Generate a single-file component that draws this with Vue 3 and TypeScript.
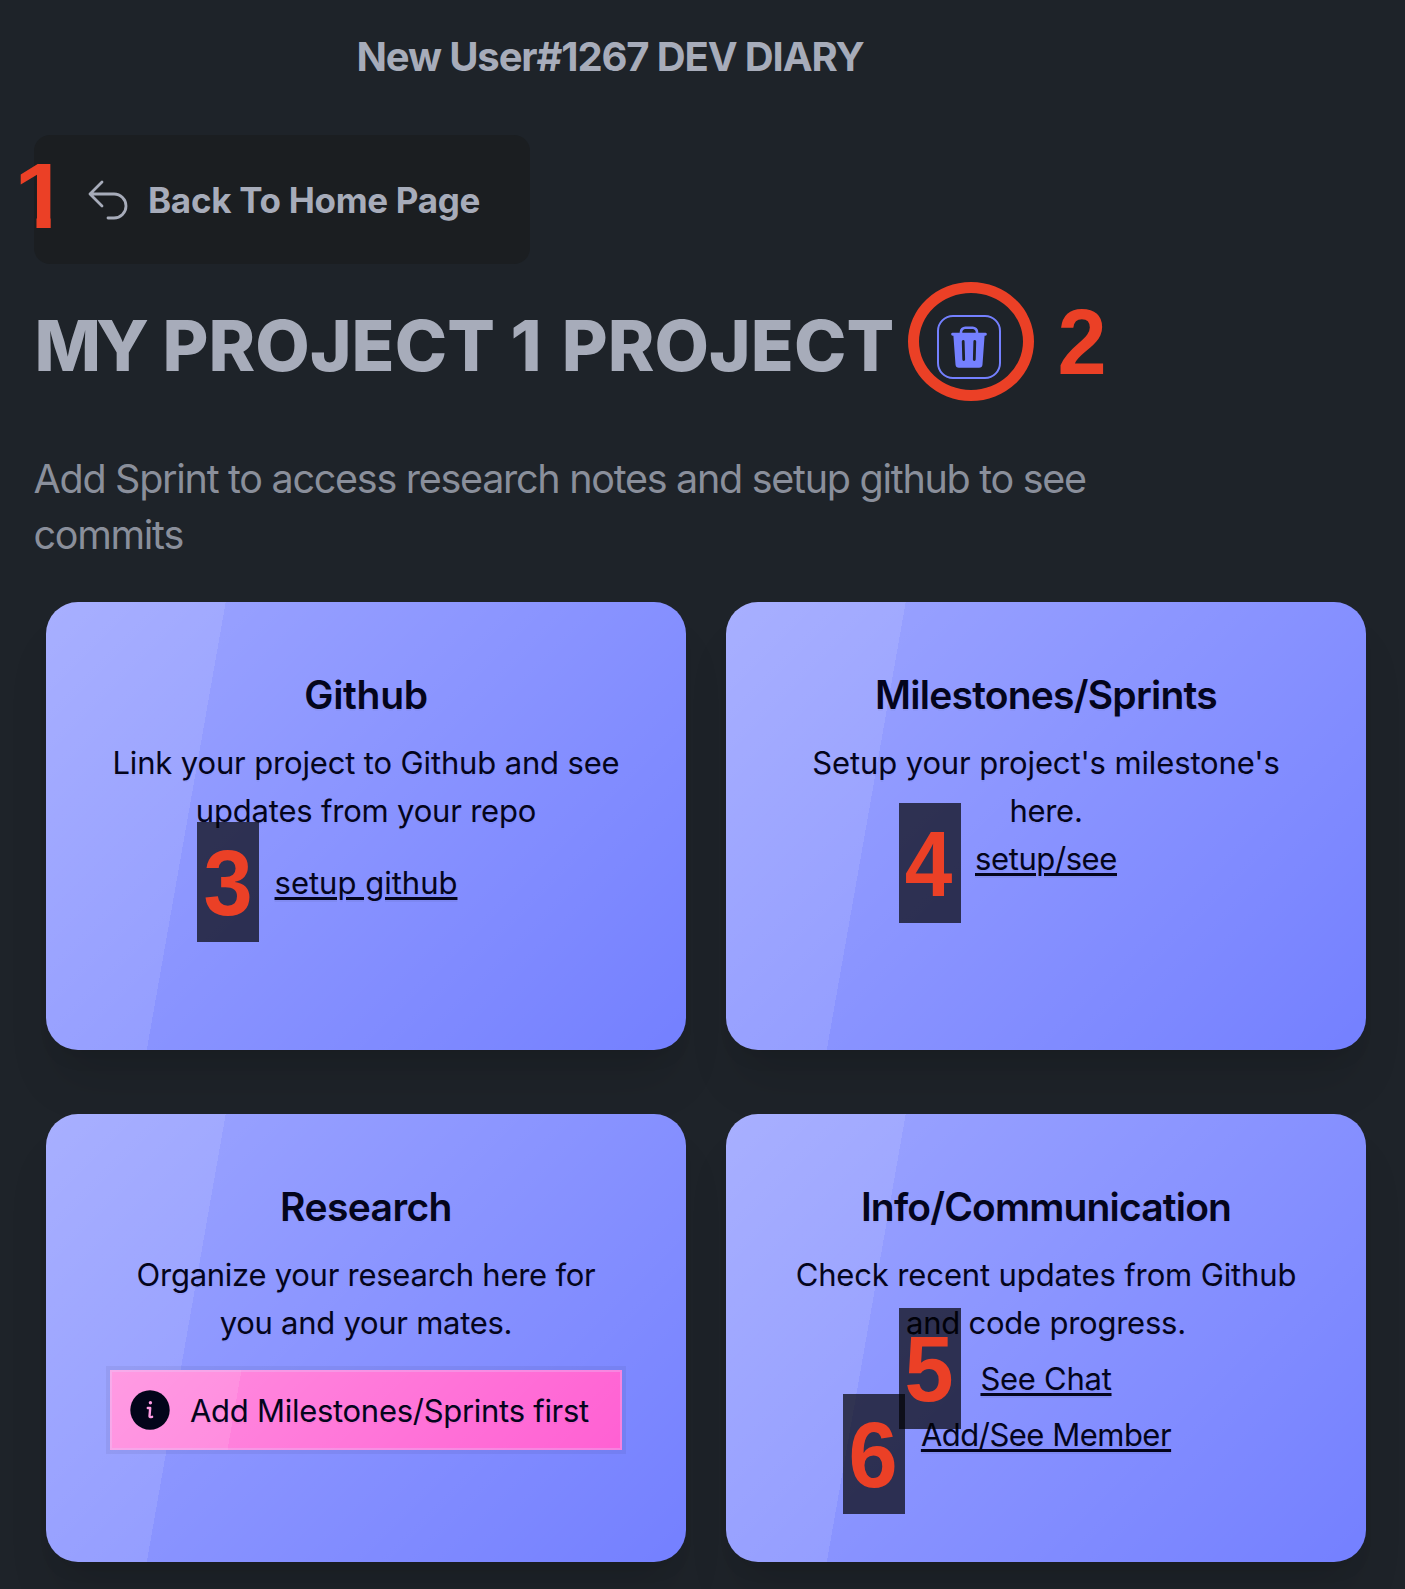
<script setup lang="ts">
interface Line { text: string; ls: number }
interface Card { title: Line; lines: Line[]; links: Line[]; kind: string; alert?: Line }
interface Mark { n: number; x: number; y: number; plate: boolean }

const track = (l: Line) => ({ letterSpacing: l.ls + 'px' })

const heading: Line[] = [
  { text: 'MY', ls: -5 },
  { text: ' ', ls: 3 },
  { text: 'PROJECT ', ls: 0.1 },
  { text: '1 ', ls: 2.3 },
  { text: 'PROJECT', ls: 0.1 },
]
const cards: Card[] = [
  {
    title: { text: 'Github', ls: -0.3 },
    lines: [{ text: 'Link your project to Github and see', ls: -0.15 }, { text: 'updates from your repo', ls: -0.2 }],
    links: [{ text: 'setup github', ls: 0 }],
    kind: 'spaced',
  },
  {
    title: { text: 'Milestones/Sprints', ls: -0.77 },
    lines: [{ text: "Setup your project's milestone's", ls: -0.13 }, { text: 'here.', ls: -0.3 }],
    links: [{ text: 'setup/see', ls: -0.4 }],
    kind: 'tight',
  },
  {
    title: { text: 'Research', ls: -0.58 },
    lines: [{ text: 'Organize your research here for', ls: -0.27 }, { text: 'you and your mates.', ls: -0.28 }],
    links: [],
    kind: 'notice',
    alert: { text: 'Add Milestones/Sprints first', ls: -0.28 },
  },
  {
    title: { text: 'Info/Communication', ls: -0.83 },
    lines: [{ text: 'Check recent updates from Github', ls: -0.13 }, { text: 'and code progress.', ls: -0.24 }],
    links: [{ text: 'See Chat', ls: -0.28 }, { text: 'Add/See Member', ls: -0.5 }],
    kind: 'list',
  },
]
const marks: Mark[] = [
  { n: 1, x: 10.5, y: 134.5, plate: false },
  { n: 2, x: 1052, y: 280.5, plate: false },
  { n: 3, x: 197, y: 821.5, plate: true },
  { n: 4, x: 899, y: 802.5, plate: true },
  { n: 5, x: 899, y: 1308, plate: true },
  { n: 6, x: 843, y: 1393.5, plate: true },
]
</script>

<template>
  <main class="page">
    <header class="top">New User#1267 DEV DIARY</header>
    <a class="back">
      <svg viewBox="0 0 24 24" width="48" height="48" fill="none" stroke="currentColor" stroke-width="1.4" stroke-linecap="round" stroke-linejoin="round"><path d="M9 15 3 9m0 0 6-6M3 9h12a6 6 0 0 1 0 12h-3" /></svg>
      <span>Back To Home Page</span>
    </a>
    <div class="heading">
      <h1><span v-for="(w, i) in heading" :key="i" :style="track(w)">{{ w.text }}</span></h1>
      <button class="trash" aria-label="Delete project">
        <svg viewBox="0 0 36 42" width="36" height="42">
          <path d="M10 8V6a4.300 4.300 0 0 1 4.300-4.300h7.400A4.300 4.300 0 0 1 26 6V8" fill="none" stroke="#7480ff" stroke-width="2.600" />
          <path fill="#7480ff" d="M1.600 6.800H34.400a1.400 1.400 0 0 1 0 2.900H33.600L31.500 38.500a3.500 3.500 0 0 1-3.500 3.200H8a3.500 3.500 0 0 1-3.500-3.200L2.400 9.700H1.600a1.400 1.400 0 0 1 0-2.900Z" />
          <path d="M12.200 15.500 12.700 33.500M23.800 15.500 23.300 33.500" stroke="#1d232a" stroke-width="2.800" stroke-linecap="round" />
        </svg>
      </button>
    </div>
    <p class="hint">Add Sprint to access research notes and setup github to see<br>commits</p>
    <section class="grid">
      <article v-for="c in cards" :key="c.title.text" class="card glass">
        <h2 :style="track(c.title)">{{ c.title.text }}</h2>
        <p v-for="l in c.lines" :key="l.text" :style="track(l)">{{ l.text }}</p>
        <div class="actions" :class="c.kind">
          <a v-for="l in c.links" :key="l.text" :style="track(l)">{{ l.text }}</a>
          <div v-if="c.alert" class="alert glass">
            <svg viewBox="0 0 40 40" width="40" height="40">
              <circle cx="20" cy="20" r="19.700" fill="#03051a" />
              <circle cx="20.400" cy="12.800" r="1.700" fill="#ff9be4" />
              <path d="M17.800 18h2.400l-.7 8.300q0 1.300 2.600.5" fill="none" stroke="#ff9be4" stroke-width="2.400" stroke-linecap="round" stroke-linejoin="round" />
            </svg>
            <span :style="track(c.alert)">{{ c.alert.text }}</span>
          </div>
        </div>
      </article>
    </section>
    <i class="ring"></i>
    <b v-for="m in marks" :key="m.n" class="mark" :class="{ plate: m.plate, one: m.n === 1, three: m.n === 3, four: m.n === 4 }" :style="{ left: m.x + 'px', top: m.y + 'px' }"><span>{{ m.n }}</span></b>
  </main>
</template>

<style>
body { background: #1e2329; }
</style>

<style scoped>
.page { position: relative; box-sizing: border-box; width: 1405px; height: 1589px; padding: 28.5px 39px 0 34.5px; overflow: hidden; background: #1e2329; color: #a7acba; font-family: Inter, "Liberation Sans", sans-serif; }
h1, h2, p { margin: 0; white-space: nowrap; }
.top { padding-left: 322px; font-size: 40px; line-height: 56px; font-weight: 650; letter-spacing: -1.13px; }
.back { display: flex; align-items: center; box-sizing: border-box; gap: 16px; width: 496px; height: 129px; margin: 50.5px 0 0 -0.5px; padding-left: 50px; border-radius: 16px; background: #1b1e21; font-size: 35px; font-weight: 650; letter-spacing: -0.3px; }
.heading { display: flex; align-items: center; height: 72px; margin-top: 45.5px; }
h1 { width: 902.5px; font-size: 70.5px; line-height: 72px; font-weight: 850; white-space: pre; }
.trash { display: flex; align-items: center; justify-content: center; flex: none; box-sizing: border-box; width: 64px; height: 64px; margin-top: 2px; padding: 0; border: 2px solid #7480ff; border-radius: 16px; background: none; }
.hint { margin: 69px 0 0 -1px; font-size: 39.5px; line-height: 56px; letter-spacing: -1.28px; color: #8a8f9b; }
.grid { display: grid; grid-template-columns: 640px 640px; grid-auto-rows: 448px; gap: 64px 40px; margin: 39px 0 0 11.5px; }
.glass { background-image: linear-gradient(135deg, rgb(255 255 255 / 30%), rgb(0 0 0 / 0%)), linear-gradient(100deg, rgb(255 255 255 / 10%) 25%, rgb(0 0 0 / 0%) 25%); text-shadow: 0 2px rgb(0 0 0 / 5%); }
.card { box-sizing: border-box; padding-top: 65px; border-radius: 32px; background-color: #7480ff; box-shadow: 0 40px 50px -10px rgb(0 0 0 / 10%), 0 16px 20px -12px rgb(0 0 0 / 10%); color: #04051c; text-align: center; font-size: 31px; line-height: 48px; }
h2 { margin-bottom: 16px; font-size: 39px; line-height: 56px; font-weight: 630; }
.actions { display: flex; flex-direction: column; align-items: center; }
.actions a { text-decoration: underline; text-decoration-thickness: 2.5px; text-underline-offset: 3px; }
.spaced { margin-top: 24px; }
.notice { margin-top: 23px; }
.list { margin-top: 8px; gap: 8px; }
.alert { display: flex; align-items: center; box-sizing: border-box; gap: 20px; width: 512px; height: 80px; padding-left: 20px; background-color: #ff60d3; box-shadow: 0 0 0 2px rgb(225 215 255 / 28%) inset, 0 0 0 4px rgb(0 0 0 / 5%); }
.alert span { padding-top: 2px; }
.ring { position: absolute; left: 908px; top: 281.5px; box-sizing: border-box; width: 126px; height: 119px; border: 11px solid #eb4026; border-radius: 50%; }
.mark { position: absolute; width: 62px; height: 120.5px; color: #eb4026; font: 700 92px/122.5px "Liberation Sans", sans-serif; text-align: center; }
.mark span { display: block; transform: translateX(-1px) scaleX(0.96); }
.mark.three span { transform: scaleX(0.96); }
.mark.four span { transform: translateX(-1.5px) scaleX(0.93); }
/* plain numeral one: the foot serif is trimmed away */
.mark.one span { transform-origin: 39.5px 0; transform: scaleX(1.07); clip-path: polygon(0 0, 39.7px 0, 39.7px 100%, 26.4px 100%, 26.4px 64px, 0 64px); }
.plate { background: rgb(0 0 0 / 68%); }
</style>
